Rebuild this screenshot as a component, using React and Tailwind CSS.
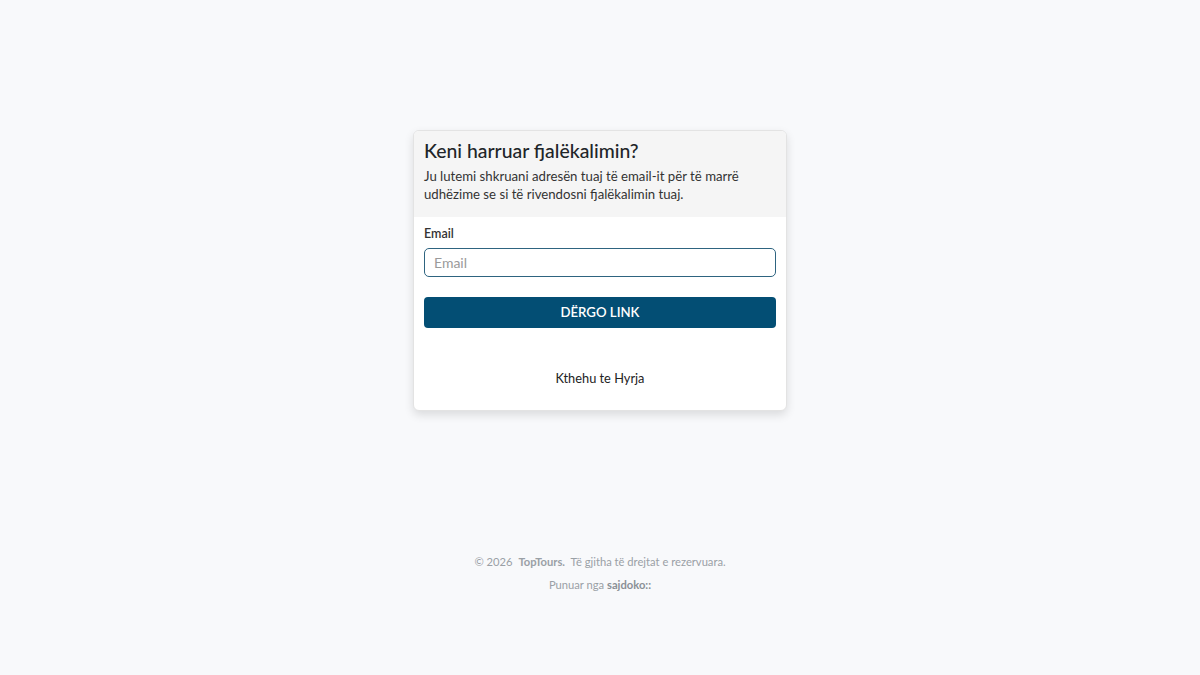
export default function App() {
  return (
    <div className="min-h-screen w-full bg-[#f8f9fb] flex flex-col items-center" style={{ fontFamily: 'Lato, "Noto Sans", sans-serif' }}>
      <div className="mt-[130px] w-[374px] rounded-[6px] border border-[#e3e3e3] bg-white shadow-[0_4px_10px_rgba(0,0,0,0.12)] overflow-hidden">
        <div className="bg-[#f5f5f5] px-[10px] pt-[6px] pb-[14px]">
          <h1 className="text-[19.4px] leading-[28px] font-medium text-[#212529]">Keni harruar fjalëkalimin?</h1>
          <p className="mt-[2px] text-[13.2px] leading-[18px] text-[#333]">Ju lutemi shkruani adresën tuaj të email-it për të marrë udhëzime se si të rivendosni fjalëkalimin tuaj.</p>
        </div>
        <div className="px-[10px] pt-[9px] pb-[22px]">
          <label className="block text-[12.5px] leading-[16px] font-semibold text-[#333]">Email</label>
          <input
            type="email"
            placeholder="Email"
            className="mt-[6px] block w-full h-[29px] rounded-[5px] border border-[#2e6480] px-[9px] text-[14px] text-[#333] placeholder:text-[#9a9a9a] outline-none"
          />
          <button className="mt-[20px] w-full h-[31px] rounded-[4px] bg-[#034e74] text-white text-[13.2px] font-semibold">DËRGO LINK</button>
          <div className="mt-[40px] text-center text-[12.8px] leading-[20px] text-[#222]">Kthehu te Hyrja</div>
        </div>
      </div>
      <footer className="mt-[143px] text-center text-[11.2px] text-[#9aa0a6]">
        <div className="leading-[16px]">© 2026 <span className="font-bold ml-[3px] mr-[3px]">TopTours.</span> Të gjitha të drejtat e rezervuara.</div>
        <div className="mt-[7px] leading-[16px]">Punuar nga <span className="font-bold text-[#8a9096]">sajdoko::</span></div>
      </footer>
    </div>
  );
}
